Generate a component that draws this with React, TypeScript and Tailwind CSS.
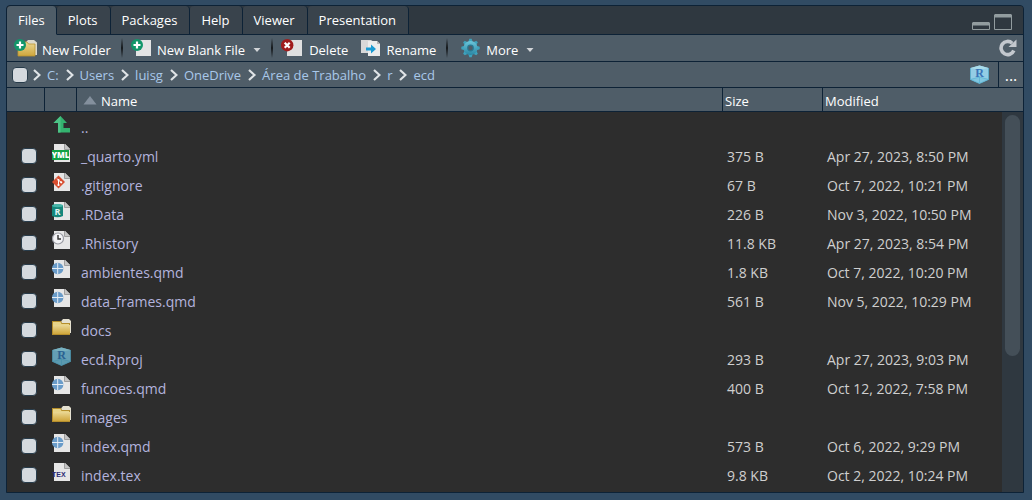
import { ReactNode } from "react";

type Kind = "yml" | "git" | "rdata" | "history" | "qmd" | "folder" | "rproj" | "tex";

type Entry = { name: string; kind: Kind; size?: string; modified?: string };

const entries: Entry[] = [
  { name: "_quarto.yml", kind: "yml", size: "375 B", modified: "Apr 27, 2023, 8:50 PM" },
  { name: ".gitignore", kind: "git", size: "67 B", modified: "Oct 7, 2022, 10:21 PM" },
  { name: ".RData", kind: "rdata", size: "226 B", modified: "Nov 3, 2022, 10:50 PM" },
  { name: ".Rhistory", kind: "history", size: "11.8 KB", modified: "Apr 27, 2023, 8:54 PM" },
  { name: "ambientes.qmd", kind: "qmd", size: "1.8 KB", modified: "Oct 7, 2022, 10:20 PM" },
  { name: "data_frames.qmd", kind: "qmd", size: "561 B", modified: "Nov 5, 2022, 10:29 PM" },
  { name: "docs", kind: "folder" },
  { name: "ecd.Rproj", kind: "rproj", size: "293 B", modified: "Apr 27, 2023, 9:03 PM" },
  { name: "funcoes.qmd", kind: "qmd", size: "400 B", modified: "Oct 12, 2022, 7:58 PM" },
  { name: "images", kind: "folder" },
  { name: "index.qmd", kind: "qmd", size: "573 B", modified: "Oct 6, 2022, 9:29 PM" },
  { name: "index.tex", kind: "tex", size: "9.8 KB", modified: "Oct 2, 2022, 10:24 PM" },
];

const tabs = ["Files", "Plots", "Packages", "Help", "Viewer", "Presentation"];
const crumbs = ["C:", "Users", "luisg", "OneDrive", "Área de Trabalho", "r", "ecd"];

function Page() {
  return (
    <>
      <path d="M2 0H13L18 5V18H2Z" fill="#e6e6e6" />
      <path d="M13 0V5H18Z" fill="#c4c4c4" />
      <path d="M12.5 0V5.5H18" fill="none" stroke="#8a8a8a" strokeWidth="0.8" />
    </>
  );
}

function FolderShape() {
  return (
    <>
      <path d="M9 3.5 11 1H17L19 3V15H9Z" fill="#e4e0d0" />
      <path d="M0 3H9L10 5H18V17H0Z" fill="#b58e2c" />
      <path d="M1 4H8.5L9.5 6H17V7H1Z" fill="#e8d488" />
      <path d="M1 7H18V16H1Z" fill="url(#folderFill)" />
    </>
  );
}

function ProjectIcon({ bright = false }: { bright?: boolean }) {
  return (
    <svg viewBox="0 0 20 20" className="size-5 shrink-0" aria-hidden="true">
      <path d="M9.5 0.5 18.500 3V14.500L9.5 18.500 0.5 14.500V3Z" fill={bright ? "#93cde5" : "#649fb6"} />
      <path d="M9.5 0.5 18.500 3 14 4H5L0.5 3Z" fill={bright ? "#a9dbea" : "#77b0c0"} />
      <path d="M9.5 12 18.500 14.500 9.5 18.500 0.5 14.500Z" fill={bright ? "#80c6e0" : "#5b9ab0"} />
      <path
        d="M0.500 3V14.500L9.500 18.500 18.500 14.500V3M9.500 18.500V12L0.500 14.500M9.500 12 18.500 14.500"
        fill="none"
        stroke={bright ? "#5bb4d3" : "#4a90aa"}
        strokeWidth="0.8"
      />
      <text
        x="9.5"
        y="12"
        fontSize="12"
        fontWeight="700"
        textAnchor="middle"
        fill={bright ? "#3a74b8" : "#2a6191"}
        className="font-['Liberation_Serif',serif]"
      >
        R
      </text>
    </svg>
  );
}

function FileIcon({ kind }: { kind: Kind }) {
  if (kind === "rproj") return <ProjectIcon />;
  return (
    <svg viewBox="0 0 20 20" className="size-5 shrink-0" aria-hidden="true">
      {kind === "folder" ? <FolderShape /> : <Page />}
      {kind === "yml" && (
        <>
          <rect x="0" y="6" width="17" height="10" fill="#12a244" />
          <text x="8.5" y="14" fontSize="8" fontWeight="800" textAnchor="middle" fill="#fff" className="font-['Open_Sans',sans-serif]">
            YML
          </text>
        </>
      )}
      {kind === "git" && (
        <>
          <path d="M6.5 2.5 13 9 6.5 15.5 0 9Z" fill="#d84e30" />
          <path d="M5 5.5 6.5 7V12M6.5 7.2 9 9.2" fill="none" stroke="#fff" strokeWidth="1" />
          <circle cx="6.5" cy="12" r="1.1" fill="#fff" />
          <circle cx="9.2" cy="9.3" r="1.1" fill="#fff" />
          <circle cx="6.5" cy="6.9" r="1" fill="#fff" />
        </>
      )}
      {kind === "rdata" && (
        <>
          <path d="M0 3.5Q5.5 1 11 3.5V14Q5.5 16.5 0 14Z" fill="#16877b" />
          <ellipse cx="5.5" cy="3.6" rx="5.5" ry="1.7" fill="#46b5a8" />
          <text x="5.5" y="12.5" fontSize="9" fontWeight="700" textAnchor="middle" fill="#e6f5f3" className="font-['Open_Sans',sans-serif]">
            R
          </text>
        </>
      )}
      {kind === "history" && (
        <>
          <circle cx="6" cy="7.5" r="5.5" fill="#f4f4f6" stroke="#9a9ca4" strokeWidth="1.2" />
          <path d="M6 4V8H9" fill="none" stroke="#333" strokeWidth="1.4" />
        </>
      )}
      {kind === "qmd" && (
        <>
          <circle cx="5.7" cy="8.5" r="5.7" fill="#6a9cc9" />
          <path d="M5.7 2.8V14.2M0 8.5H11.4" stroke="#e6edf4" strokeWidth="1" />
        </>
      )}
      {kind === "tex" && (
        <text x="0" y="14" fontSize="7" fontWeight="700" fill="#2c2a72" className="font-['Liberation_Sans',sans-serif]">
          TEX
        </text>
      )}
    </svg>
  );
}

function UpIcon() {
  return (
    <svg viewBox="0 0 20 20" className="size-5" aria-hidden="true">
      <path d="M8.5 0 15 7H11.5V12H18V16.5H6V7H1.5Z" fill="#34b36f" />
      <path d="M8.5 0V16.5H6V7H1.5Z" fill="#4cc386" />
    </svg>
  );
}

function AddBadge() {
  return (
    <>
      <circle cx="6" cy="6" r="6" fill="#12966a" />
      <path d="M6 2.5V9.5M2.5 6H9.5" stroke="#fff" strokeWidth="2.2" />
    </>
  );
}

function NewFolderIcon() {
  return (
    <svg viewBox="0 0 24 18" className="h-[18px] w-6" aria-hidden="true">
      <path d="M12 3 14 1H20L23 3.500V16H12Z" fill="#dcd9cb" />
      <path d="M4 3H13L14.500 5H21V17H4Z" fill="url(#folderFill)" stroke="#bb9630" strokeWidth="0.8" />
      <AddBadge />
    </svg>
  );
}

function NewFileIcon() {
  return (
    <svg viewBox="0 0 22 18" className="h-[18px] w-[22px]" aria-hidden="true">
      <path d="M5 1H20V17H5Z" fill="#e4e4e4" />
      <AddBadge />
    </svg>
  );
}

function DeleteIcon() {
  return (
    <svg viewBox="0 0 24 18" className="h-[18px] w-6" aria-hidden="true">
      <path d="M6 1H21V17H6Z" fill="#e0e0e0" />
      <circle cx="6.2" cy="6.2" r="6.2" fill="#a01c1c" />
      <path d="M3.700 3.700 8.700 8.700M8.700 3.700 3.700 8.700" stroke="#fff" strokeWidth="2.2" />
    </svg>
  );
}

function RenameIcon() {
  return (
    <svg viewBox="-5 0 26 18" className="h-[18px] w-[26px]" aria-hidden="true">
      <path d="M0 1H10L13 3V14H0Z" fill="#d8d8d8" />
      <path d="M7 2H16L19 5V17H7Z" fill="#ececec" />
      <path d="M16 2V5H19Z" fill="#b5b5b5" />
      <path d="M5 8.500H10V5.500L15 10 10 14.500V11.500H5Z" fill="#1a9bd3" />
    </svg>
  );
}

const teeth = [0, 45, 90, 135, 180, 225, 270, 315];

function GearIcon() {
  return (
    <svg viewBox="-5 0 26 20" className="h-5 w-[26px]" aria-hidden="true">
      {teeth.map((angle) => (
        <path key={angle} d="M7.3 4 8.300 0.800H10.700L11.700 4Z" fill="#3ea3bd" transform={`rotate(${angle} 9.5 10)`} />
      ))}
      <circle cx="9.5" cy="10" r="7" fill="url(#gearFill)" />
      <circle cx="9.5" cy="10" r="3.400" fill="#2a7891" />
      <circle cx="9.5" cy="10" r="2.200" fill="#4f5d68" />
    </svg>
  );
}

function Chevron() {
  return (
    <svg viewBox="0 0 8 12" className="h-3 w-2 shrink-0" aria-hidden="true">
      <path d="M1 1 6.500 6 1 11" fill="none" stroke="#dfe3e6" strokeWidth="2.2" />
    </svg>
  );
}

function Caret() {
  return (
    <svg viewBox="0 0 8 4" className="mt-1 ml-1 h-1 w-2" aria-hidden="true">
      <path d="M0.500 0H7.500L4 4Z" fill="#d2d5d8" />
    </svg>
  );
}

function Tool({ icon, label, menu = false }: { icon: ReactNode; label: string; menu?: boolean }) {
  return (
    <button type="button" className="flex items-center gap-1 whitespace-nowrap">
      {icon}
      <span className="pt-1">{label}</span>
      {menu && <Caret />}
    </button>
  );
}

function Separator() {
  return <span className="ml-0.5 h-5 w-0.5 bg-linear-to-b from-[#4f5d68] via-[#15191c] to-[#4f5d68]" aria-hidden="true" />;
}

function Check({ label }: { label: string }) {
  return (
    <input
      type="checkbox"
      aria-label={label}
      className="block size-4 shrink-0 appearance-none rounded border border-[#283c4b] bg-[#d4d9de] checked:bg-[#6aa5d8]"
    />
  );
}

export default function App() {
  return (
    <div className="min-h-screen bg-[#314b63] px-1.5 pt-[5px] pr-2 pb-[7px] font-['Open_Sans',sans-serif] text-[13px] leading-5 text-white">
      <svg className="absolute size-0" aria-hidden="true">
        <defs>
          <linearGradient id="folderFill" x1="0" y1="0" x2="0" y2="1">
            <stop offset="0" stopColor="#ead794" />
            <stop offset="1" stopColor="#cfa63c" />
          </linearGradient>
          <linearGradient id="gearFill" x1="0" y1="0" x2="0" y2="1">
            <stop offset="0" stopColor="#6cc6da" />
            <stop offset="1" stopColor="#2a86a3" />
          </linearGradient>
        </defs>
      </svg>
      <main className="overflow-hidden rounded-t border border-[#0d2236] bg-[#2d2d2d]">
        <div className="flex h-[29px] items-stretch bg-[#2f3840]">
          <div role="tablist" className="flex">
            {tabs.map((tab, i) => (
              <button
                key={tab}
                type="button"
                role="tab"
                aria-selected={i === 0}
                className={
                  i === 0
                    ? "rounded-t-sm border-r border-b border-r-[#0d2236] border-b-[#4f5d68] bg-[#4f5d68] px-[11px]"
                    : "rounded-t-sm border-r border-b border-[#0d2236] bg-[#39434c] pr-3 pl-[11px]"
                }
              >
                {tab}
              </button>
            ))}
          </div>
          <div className="flex flex-1 items-center justify-end gap-1 border-b border-[#0d2236] pt-0.5 pr-[11px]">
            <button type="button" aria-label="Minimize">
              <svg viewBox="0 0 18 17" className="h-[17px] w-[18px]" aria-hidden="true">
                <path d="M1 9H17L18 10V12.5H0V10Z" fill="#929c9f" />
                <path d="M0.5 11V16.5H17.5V11" fill="none" stroke="#929c9f" />
              </svg>
            </button>
            <button type="button" aria-label="Maximize">
              <svg viewBox="0 0 18 17" className="h-[17px] w-[18px]" aria-hidden="true">
                <path d="M1 1H17L18 2V4.5H0V2Z" fill="#929c9f" />
                <path d="M0.5 3V16.5H17.5V3" fill="none" stroke="#929c9f" />
              </svg>
            </button>
          </div>
        </div>

        <div role="toolbar" aria-label="File actions" className="flex h-[27px] items-center gap-2 border-b border-[#0d2236] bg-[#4f5d68] pr-1.5 pl-[7px]">
          <Tool icon={<NewFolderIcon />} label="New Folder" />
          <Separator />
          <Tool icon={<NewFileIcon />} label="New Blank File" menu />
          <Separator />
          <Tool icon={<DeleteIcon />} label="Delete" />
          <Tool icon={<RenameIcon />} label="Rename" />
          <Separator />
          <Tool icon={<GearIcon />} label="More" menu />
          <button type="button" aria-label="Refresh" className="ml-auto">
            <svg viewBox="0 0 18 18" className="size-[18px]" aria-hidden="true">
              <path d="M14.800 11.500A6.600 6.600 0 1 1 13.200 4.200" fill="none" stroke="#c3c8ce" strokeWidth="3.6" />
              <path d="M17.500 0.500V8H9.500Z" fill="#c3c8ce" />
            </svg>
          </button>
        </div>

        <div className="flex h-[26px] items-stretch border-b border-[#0d2236] bg-[#4f5d68]">
          <div className="flex flex-1 items-center gap-[5px] pl-[5px]">
            <Check label="Select all files" />
            <nav aria-label="Path" className="flex items-center gap-[7px]">
              {crumbs.map((crumb) => (
                <span key={crumb} className="flex items-center gap-1.5 whitespace-nowrap">
                  <Chevron />
                  <a href="#" className="text-[#a9c8ea]">{crumb}</a>
                </span>
              ))}
            </nav>
          </div>
          <button type="button" aria-label="Project directory" className="px-2">
            <ProjectIcon bright />
          </button>
          <button type="button" aria-label="Go to directory" className="w-[25px] border-l border-[#0d2236] text-base leading-5">
            ...
          </button>
        </div>

        <div className="relative pb-[3px]">
          <table className="w-full table-fixed border-separate border-spacing-0 text-left">
            <colgroup>
              <col className="w-[38px]" />
              <col className="w-8" />
              <col />
              <col className="w-[100px]" />
              <col className="w-[200px]" />
            </colgroup>
            <thead>
              <tr className="h-6 bg-[#4f5d68]">
                <th aria-label="Select" className="border-r border-b border-[#0d2236]" />
                <th aria-label="Type" className="border-r border-b border-[#0d2236]" />
                <th className="border-r border-b border-[#0d2236] p-0 pt-0.5 pl-1.5 font-normal">
                  <span className="flex items-center gap-1">
                    <svg viewBox="0 0 14 9" className="h-[9px] w-3.5" aria-hidden="true">
                      <path d="M7 0 13.500 8.500H0.500Z" fill="#84909d" />
                    </svg>
                    Name
                  </span>
                </th>
                <th className="border-r border-b border-[#0d2236] p-0 pt-0.5 pl-0.5 font-normal">Size</th>
                <th className="border-b border-[#0d2236] p-0 pt-0.5 pl-0.5 font-normal">Modified</th>
              </tr>
            </thead>
            <tbody className="text-sm leading-5 text-[#cfcfcf]">
              <tr className="h-[29px]">
                <td />
                <td className="p-0 pt-1 pl-[7px] align-top"><UpIcon /></td>
                <td className="p-0 pt-0.5 pl-1">
                  <a href="#" className="text-[#b3b3dd]" aria-label="Parent directory">..</a>
                </td>
                <td />
                <td />
              </tr>
              {entries.map((entry) => (
                <tr key={entry.name} className="h-[29px]">
                  <td className="p-0 pl-3.5"><Check label={`Select ${entry.name}`} /></td>
                  <td className="p-0 pt-[3px] pl-[7px] align-top"><FileIcon kind={entry.kind} /></td>
                  <td className="p-0 pt-0.5 pl-1"><a href="#" className="text-[#b3b3dd]">{entry.name}</a></td>
                  <td className="p-0 pt-0.5 pl-1">{entry.size}</td>
                  <td className="p-0 pt-0.5 pl-1">{entry.modified}</td>
                </tr>
              ))}
            </tbody>
          </table>
          <div className="absolute top-6 right-0 bottom-0 w-[21px] bg-[#2f3840] px-[3px] pt-[3px]" aria-hidden="true">
            <div className="h-16/25 rounded-full bg-[#444f58]" />
          </div>
        </div>
      </main>
    </div>
  );
}
